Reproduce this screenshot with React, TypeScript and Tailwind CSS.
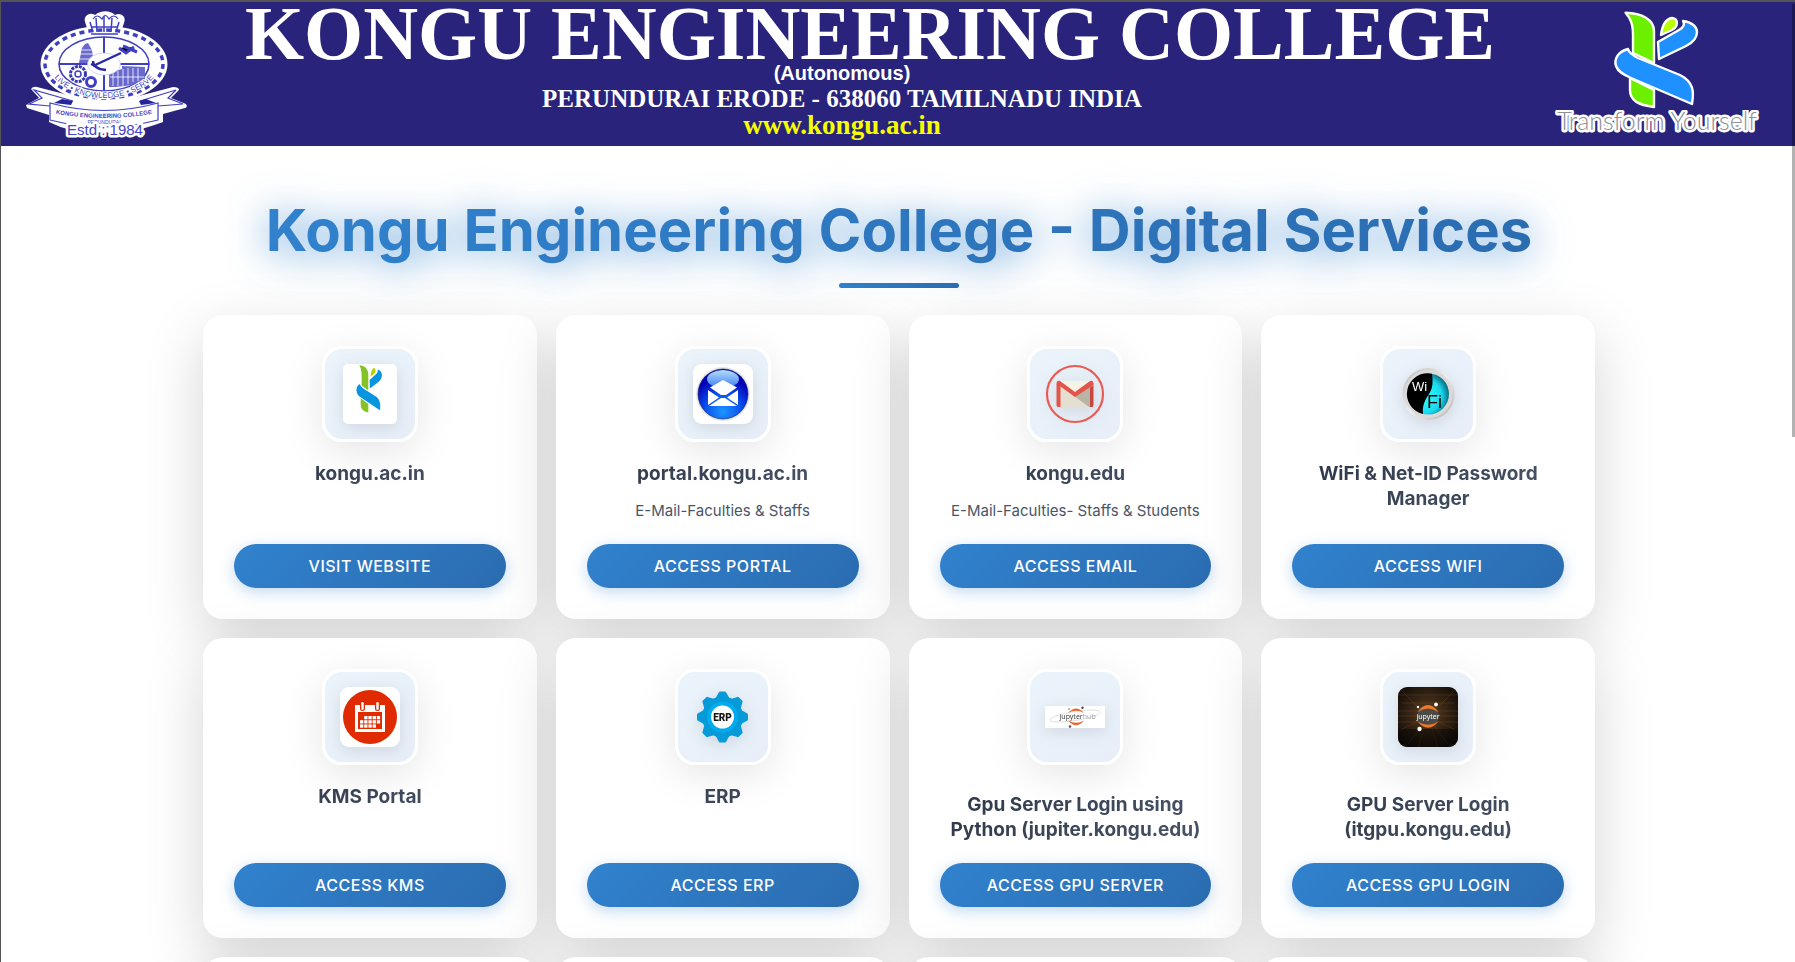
import React from "react";

const GREEN_TOP = "M13.6 2.7C30 3 42 10 42 21V53L21 43V25C21 13 18 8 13.6 2.7Z";
const GREEN_LOW = "M18 68L42 80V97C27 95 18 91 18 80Z";
const BLUE_BAND = "M16 39C5 42 2 50 4 56C6 62 12 65 19 68L80 94C82 82 82 72 68 65L26 48C20 45 17 43 16 39Z";
const BLUE_TOP = "M46 32L67 20C72 17 73 14 71 11C80 12 85 17 85 22C85 28 80 33 74 36L47 49Z";
const DROP = "M49 25C50 17 53 9 60 8C67 9 66 17 60 20Z";

function Mark({ green, blue, drop, outline }: { green: string; blue: string; drop: string; outline?: boolean }) {
  const stroke = outline ? "#fff" : "none";
  return (
    <g stroke={stroke} strokeWidth={outline ? 2.4 : 0} strokeLinejoin="round">
      <path d={GREEN_TOP} fill={green} />
      <path d={GREEN_LOW} fill={green} />
      <path d={BLUE_BAND} fill={blue} />
      <path d={BLUE_TOP} fill={blue} />
      <path d={DROP} fill={drop} />
    </g>
  );
}

function Crest() {
  const blue = "#3f3fc4";
  return (
    <svg viewBox="0 0 164 130" className="h-[130px] w-[164px] shrink-0" role="img" aria-label="College crest">
      <path d="M66 30L60 12C58 5 66 2 70 5C76 0 85 0 90 5C95 2 102 6 99 13L93 30Z" fill="#fff" />
      <ellipse cx="79" cy="54" rx="63.500" ry="38.500" fill="#fff" />
      <path d="M1 95L14 88L6 79Q8 76 12 77L47 86Q80 94 114 86L148 77Q154 77 154 80L146 88L161 94Q163 97 160 98L138 104L138 112Q100 126 79 122Q50 125 24 112L24 105L2 98Z" fill="#fff" />
      <g fill="none" stroke={blue}>
        <ellipse cx="79" cy="54" rx="59" ry="34" strokeWidth="3.500" strokeDasharray="5 4" />
        <ellipse cx="79" cy="54" rx="45" ry="27" strokeWidth="1.600" />
        <path d="M79 27V81M34 54H124" strokeWidth="2" />
        <path d="M68 22L65 12M72 22L71 8M79 22V6M86 22L87 8M91 22L94 12M66 17H92M66 24H93" strokeWidth="1.500" />
        <path d="M68 9Q72 3 77 9Q80 2 84 9Q89 3 93 9" strokeWidth="1.200" />
      </g>
      <g fill="#6868cd">
        <path d="M54 53L57 38L60 34L63 33L67 40L69 53Z" />
        <path d="M84 77V63L97 59V56L120 57V69Q108 77 84 77Z" />
      </g>
      <g stroke="#fff" strokeWidth="0.800">
        <path d="M57 40H67M56 44H68M55 49H69M88 62V76M93 61V76M98 59V76M103 58V74M108 58V72M113 58V71M85 67H119" />
      </g>
      <circle cx="53" cy="64" r="7.500" fill="none" stroke="#3939ad" strokeWidth="3" strokeDasharray="3 1" />
      <circle cx="53" cy="64" r="3" fill="none" stroke={blue} strokeWidth="1.500" />
      <circle cx="66" cy="72" r="4.500" fill="none" stroke={blue} strokeWidth="3" />
      <path d="M94 38L101 43L109 37M98 36L112 42" stroke={blue} strokeWidth="3" />
      <ellipse cx="79" cy="54" rx="16.500" ry="11" fill="#fff" stroke="#b9b9ee" strokeWidth="0.600" />
      <path d="M68 56L96 43M68 51Q68 59 81 60M72 57L66 54" fill="none" stroke="#2929a5" strokeWidth="2.400" />
      <path id="motto" d="M22 48A57 40 0 0 0 136 48" fill="none" />
      <text fontFamily="Liberation Sans" fontSize="8" textAnchor="middle" fill={blue} stroke="#fff" strokeWidth="2" paintOrder="stroke">
        <textPath href="#motto" startOffset="50%">LIVE • KNOWLEDGE • SERVE</textPath>
      </text>
      <g fill="none" stroke={blue} strokeWidth="1.200">
        <path d="M25 93Q79 108 133 93V110Q79 124 25 110Z" />
        <path d="M25 96L4 94L17 88L9 80L48 91M133 96L158 94L143 88L151 80L115 91" />
      </g>
      <path d="M37 89L48 91L46 95L29 93ZM121 89L114 91L116 95L131 93Z" fill="#24249b" />
      <path id="ribbon" d="M27 103Q79 113 131 103" fill="none" />
      <text fontFamily="Liberation Sans" fontSize="6" fontWeight="bold" textAnchor="middle" fill={blue}>
        <textPath href="#ribbon" startOffset="50%">KONGU ENGINEERING COLLEGE</textPath>
      </text>
      <text x="79" y="114" textAnchor="middle" fontFamily="Liberation Sans" fontSize="5" fill={blue}>PERUNDURAI</text>
      <text x="80" y="125" textAnchor="middle" fontFamily="Liberation Sans" fontSize="15" fill="#4343cc" stroke="#fff" strokeWidth="5" strokeLinejoin="round" paintOrder="stroke">Estd : 1984</text>
    </svg>
  );
}

function BannerLogo() {
  return (
    <div className="flex w-[212px] shrink-0 flex-col items-center">
      <svg viewBox="0 0 90 100" className="h-[100px] w-[90px]" role="img" aria-label="Kongu mark">
        <Mark green="#6cf000" blue="#1e90ff" drop="#b8ff00" outline />
      </svg>
      <svg viewBox="0 0 212 34" className="h-[34px] w-[212px]">
        <text x="106" y="20" textAnchor="middle" fontFamily="Lato" fontSize="25" fontWeight="300" fill="#8f8f98" stroke="#fff" strokeWidth="5" strokeLinejoin="round" paintOrder="stroke">Transform Yourself</text>
      </svg>
    </div>
  );
}

const iconSize = "h-[60px] w-[60px] drop-shadow-[0_4px_8px_rgba(0,0,0,0.1)]";

function KonguIcon() {
  return (
    <svg viewBox="0 0 54 60" className="h-[60px] w-[54px] drop-shadow-[0_4px_8px_rgba(0,0,0,0.1)]">
      <rect width="54" height="60" rx="5" fill="#fff" />
      <svg x="12" y="0" width="28.500" height="50" viewBox="0 0 90 100" preserveAspectRatio="none">
        <path d={GREEN_TOP} fill="#84c225" />
        <path d={GREEN_LOW} fill="#84c225" />
        <path d={BLUE_BAND} fill="#0895e0" stroke="#fff" strokeWidth="2" />
        <path d={BLUE_TOP} fill="#0895e0" />
        <path d={DROP} fill="#b9d300" />
      </svg>
    </svg>
  );
}

function PortalIcon() {
  return (
    <svg viewBox="0 0 60 60" className={iconSize}>
      <defs>
        <radialGradient id="orb" cx="0.500" cy="0.850" r="0.800">
          <stop offset="0" stopColor="#1c96ff" />
          <stop offset="0.450" stopColor="#0a50ee" />
          <stop offset="0.850" stopColor="#0202b4" />
        </radialGradient>
        <linearGradient id="gloss" x1="0" y1="0" x2="0" y2="1">
          <stop offset="0" stopColor="#b4ddff" />
          <stop offset="1" stopColor="#3b7cf0" />
        </linearGradient>
      </defs>
      <rect width="60" height="60" rx="9" fill="#fff" />
      <circle cx="30" cy="30" r="27" fill="#e4e7e9" />
      <circle cx="30" cy="30" r="25" fill="url(#orb)" stroke="#16165c" strokeWidth="0.600" />
      <ellipse cx="30" cy="15" rx="16" ry="9" fill="url(#gloss)" />
      <path d="M17 23.500L30 16L44 23.500L33 31H28Z" fill="#fff" />
      <path d="M15 26L26 33.500L15 41ZM45 26L34 33.500L45 41ZM16 42L28 34H32L44 42Z" fill="#fff" />
    </svg>
  );
}

function MailIcon() {
  return (
    <svg viewBox="0 0 60 60" className={iconSize}>
      <circle cx="30" cy="30" r="28" fill="none" stroke="#ea5a52" strokeWidth="2.200" />
      <rect x="12" y="17" width="36" height="26" rx="2" fill="#e4dfd0" />
      <path d="M14 17H46L30 29Z" fill="#f5f2e6" />
      <path d="M29 32L45 21V43H44Z" fill="#b8b5a7" />
      <path d="M11.500 19Q12 16 15 17L30 28L45 17Q48 16 48.500 19V21L30 33L15.500 22.500V43H13Q11.500 43 11.500 41Z" fill="#e4544b" />
      <path d="M45 23.500L48.500 21V41Q48.500 43 47 43H45Z" fill="#c9463f" />
    </svg>
  );
}

function WifiIcon() {
  return (
    <svg viewBox="0 0 60 60" className={iconSize}>
      <defs>
        <linearGradient id="rim" x1="0" y1="0" x2="1" y2="1">
          <stop offset="0" stopColor="#b8b8b8" />
          <stop offset="0.500" stopColor="#f2f0ee" />
          <stop offset="1" stopColor="#b0b0b0" />
        </linearGradient>
        <radialGradient id="cyan" cx="0.400" cy="0.550" r="0.600">
          <stop offset="0" stopColor="#32ffff" />
          <stop offset="0.700" stopColor="#19d9ee" />
          <stop offset="1" stopColor="#0c6f84" />
        </radialGradient>
      </defs>
      <circle cx="30.500" cy="30" r="26" fill="url(#rim)" />
      <circle cx="30.500" cy="30" r="24" fill="#dcdad8" />
      <circle cx="30.500" cy="30" r="20.500" fill="url(#cyan)" />
      <path d="M34 9.800A20.500 20.500 0 1 0 25 50C24 42 27 36 31 30C35 24 35 18 34 9.800Z" fill="#000" />
      <text x="14" y="27" fontFamily="Liberation Sans" fontSize="13" fill="#fff">Wi</text>
      <text x="29" y="44" fontFamily="Liberation Sans" fontSize="18" fill="#000">Fi</text>
    </svg>
  );
}

function CalendarIcon() {
  const cells = [
    [1, 0], [2, 0], [3, 0], [4, 0],
    [0, 1], [1, 1], [2, 1], [3, 1], [4, 1],
    [0, 2], [1, 2], [2, 2], [3, 2],
  ];
  return (
    <svg viewBox="0 0 60 60" className={iconSize}>
      <rect width="60" height="60" rx="9" fill="#fff" />
      <circle cx="30" cy="30" r="27" fill="#e02b00" />
      <rect x="15" y="18" width="30" height="27" fill="#fff" />
      <rect x="18" y="25" width="24" height="17" fill="#e02b00" />
      {[22.5, 37.5].map((x) => (
        <g key={x}>
          <rect x={x - 2.5} y="16" width="5" height="8" rx="2.500" fill="#e02b00" />
          <rect x={x - 1.2} y="15" width="2.400" height="8" rx="1.200" fill="#fff" />
        </g>
      ))}
      {cells.map(([c, r]) => (
        <rect key={`${c}-${r}`} x={20 + c * 4.2} y={29 + r * 4.2} width="3.300" height="3.300" fill="#fff" />
      ))}
    </svg>
  );
}

function ErpIcon() {
  return (
    <svg viewBox="0 0 60 60" className={iconSize}>
      <g fill="#069bd8">
        <circle cx="29.500" cy="30" r="20.500" />
        {[0, 45, 90, 135, 180, 225, 270, 315].map((a) => (
          <path key={a} d="M21 14L25.500 6Q26 4.500 27 4.500H32Q33 4.500 33.500 6L38 14Z" transform={`rotate(${a} 29.500 30)`} />
        ))}
      </g>
      <circle cx="29.500" cy="30" r="15.500" fill="#02abee" />
      <circle cx="29.500" cy="30" r="11.500" fill="#fff" />
      <text x="29.500" y="33.500" textAnchor="middle" fontFamily="Roboto" fontWeight="900" fontSize="10" fill="#171717">ERP</text>
    </svg>
  );
}

function HubIcon() {
  return (
    <svg viewBox="0 0 60 22" className="h-[22px] w-[60px] drop-shadow-[0_4px_8px_rgba(0,0,0,0.1)]">
      <rect width="60" height="22" fill="#fff" />
      <ellipse cx="30" cy="10" rx="25.500" ry="4.500" fill="none" stroke="#dedede" strokeWidth="0.900" transform="rotate(-9 30 10)" />
      <path d="M23 7Q31 -2 39 7Q31 2.500 23 7ZM23 14.500Q31 24 39 14.500Q31 19 23 14.500Z" fill="#e9682c" />
      <circle cx="37.500" cy="1.800" r="1.300" fill="#555" />
      <circle cx="24" cy="3" r="0.800" fill="#666" />
      <circle cx="25" cy="20.500" r="1.300" fill="#555" />
      <text x="14.500" y="13" fontFamily="Noto Sans" fontSize="7" fill="#444">jupyter<tspan fill="#aaa">hub</tspan></text>
    </svg>
  );
}

function JupyterIcon() {
  return (
    <svg viewBox="0 0 60 60" className={iconSize}>
      <defs>
        <radialGradient id="hall" cx="0.500" cy="0.450" r="0.650">
          <stop offset="0" stopColor="#5c4023" />
          <stop offset="0.500" stopColor="#342313" />
          <stop offset="1" stopColor="#0d0907" />
        </radialGradient>
        <clipPath id="hallClip"><rect width="60" height="60" rx="9" /></clipPath>
      </defs>
      <g clipPath="url(#hallClip)">
        <rect width="60" height="60" fill="url(#hall)" />
        <g stroke="#a06b32" strokeWidth="0.600" opacity="0.350">
          <path d="M0 8H60M4 16H56M0 24H60M0 29H60M0 35H60" />
          <path d="M30 30L0 44M30 30L8 60M30 30L20 60M30 30L40 60M30 30L52 60M30 30L60 44M30 30L0 0M30 30L60 0" />
        </g>
        <path d="M0 42H60V60H0Z" fill="#070504" opacity="0.500" />
      </g>
      <circle cx="30" cy="29" r="11" fill="#4c4a46" />
      <path d="M19.500 25Q30 11 40.500 25Q30 18 19.500 25ZM19.500 34.500Q30 47 40.500 34.500Q30 41 19.500 34.500Z" fill="#f37726" />
      <circle cx="38" cy="17.500" r="1.900" fill="#fff" />
      <circle cx="20" cy="20" r="1.200" fill="#fff" />
      <circle cx="21.500" cy="42" r="2.200" fill="#fff" />
      <text x="30" y="31.500" textAnchor="middle" fontFamily="Noto Sans" fontSize="7" fill="#fff">jupyter</text>
    </svg>
  );
}

type Service = { title: string; note?: string; action: string; Icon: () => React.ReactElement; low?: boolean };

const services: Service[] = [
  { title: "kongu.ac.in", action: "Visit Website", Icon: KonguIcon },
  { title: "portal.kongu.ac.in", note: "E-Mail-Faculties & Staffs", action: "Access Portal", Icon: PortalIcon },
  { title: "kongu.edu", note: "E-Mail-Faculties- Staffs & Students", action: "Access Email", Icon: MailIcon },
  { title: "WiFi & Net-ID Password Manager", action: "Access WiFi", Icon: WifiIcon },
  { title: "KMS Portal", action: "Access KMS", Icon: CalendarIcon },
  { title: "ERP", action: "Access ERP", Icon: ErpIcon },
  { title: "Gpu Server Login using Python (jupiter.kongu.edu)", action: "Access GPU Server", Icon: HubIcon, low: true },
  { title: "GPU Server Login (itgpu.kongu.edu)", action: "Access GPU Login", Icon: JupyterIcon, low: true },
];

const cardShell = "flex flex-col items-center rounded-[20px] bg-white shadow-[0_20px_60px_rgba(0,0,0,0.17)]";

function ServiceCard({ title, note, action, Icon, low }: Service) {
  return (
    <article className={`${cardShell} p-[31px]`}>
      <div className="flex size-24 shrink-0 items-center justify-center rounded-[20px] border-[3px] border-white bg-linear-135 from-[#ebf4fb] to-[#e7eef8] shadow-[0_10px_40px_rgba(0,0,0,0.1)]">
        <Icon />
      </div>
      <div className={`flex w-full flex-1 flex-col items-center pb-[21px] text-center ${low ? "pt-[27px]" : "pt-[19px]"}`}>
        <h2 className="w-full bg-linear-135 from-[#2d3748] to-[#4a5568] bg-clip-text text-[19px] leading-[25px] font-bold text-transparent">{title}</h2>
        {note && <p className="mt-[13px] text-[15px] leading-6 whitespace-nowrap text-[#4a5568]">{note}</p>}
      </div>
      <a href="#" className="block w-full rounded-full bg-linear-135 from-[#3182ce] to-[#2b6cb0] text-center text-[16px] leading-[44px] font-medium tracking-[0.5px] text-white uppercase shadow-[0_4px_15px_rgba(49,130,206,0.3)]">
        {action}
      </a>
    </article>
  );
}

export default function App() {
  return (
    <div className="h-screen overflow-y-auto border-t-2 border-l border-[#555555] bg-white font-['Inter',sans-serif] [scrollbar-width:none]">
      <header className="flex h-36 items-start gap-2 bg-[#29237b] pt-2 pr-8 pl-6">
        <Crest />
        <div className="min-w-0 flex-1 text-center font-['Liberation_Serif',serif] font-bold whitespace-nowrap text-white">
          <p className="text-[76px] leading-[46px]">KONGU ENGINEERING COLLEGE</p>
          <div className="pt-[5px] pr-14">
            <p className="font-['Liberation_Sans',sans-serif] text-[20px] leading-6">(Autonomous)</p>
            <p className="text-[25px] leading-7">PERUNDURAI ERODE - 638060 TAMILNADU INDIA</p>
            <p className="text-[27px] leading-6 text-[#f6ff00]">www.kongu.ac.in</p>
          </div>
        </div>
        <BannerLogo />
      </header>
      <main className="mx-auto max-w-[1394px] pt-[49px] pl-[2px]">
        <div className="flex flex-col items-center">
          <h1 className="bg-linear-135 from-[#3182ce] to-[#2b6cb0] bg-clip-text text-[58px] leading-[70px] font-bold text-transparent drop-shadow-[0_4px_20px_rgba(49,130,206,0.85)]">
            Kongu Engineering College - Digital Services
          </h1>
          <div className="mt-[18px] h-[5px] w-[120px] rounded-sm bg-linear-135 from-[#3182ce] to-[#2b6cb0]" />
        </div>
        <section className="mt-[27px] grid grid-cols-4 gap-[19px] pb-10">
          {services.map((s) => (
            <ServiceCard key={s.title} {...s} />
          ))}
          {[0, 1, 2, 3].map((n) => (
            <div key={n} className={`${cardShell} min-h-[300px]`} />
          ))}
        </section>
      </main>
      <div className="fixed top-1 right-0 h-[433px] w-[3px] bg-black/30" />
    </div>
  );
}
